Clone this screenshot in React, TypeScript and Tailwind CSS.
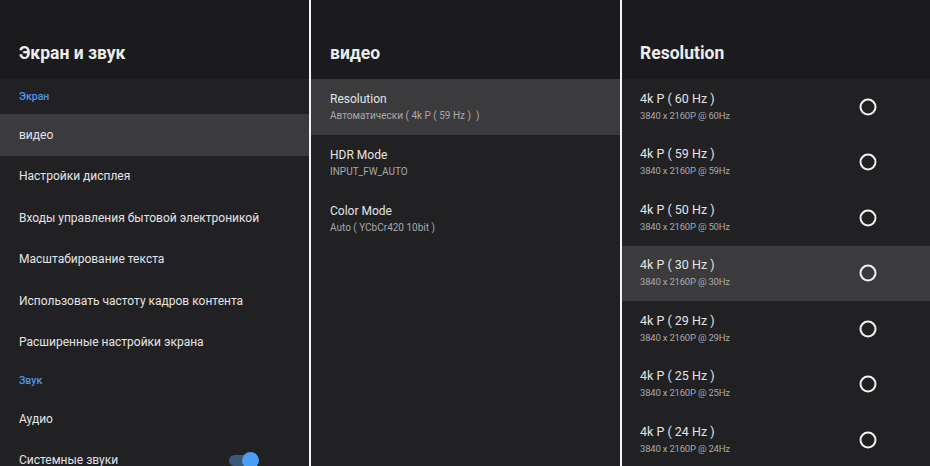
import React from "react";

type Row = { kind: "cat" | "item"; label: string; active?: boolean; toggle?: boolean };

const leftRows: Row[] = [
  { kind: "cat", label: "Экран" },
  { kind: "item", label: "видео", active: true },
  { kind: "item", label: "Настройки дисплея" },
  { kind: "item", label: "Входы управления бытовой электроникой" },
  { kind: "item", label: "Масштабирование текста" },
  { kind: "item", label: "Использовать частоту кадров контента" },
  { kind: "item", label: "Расширенные настройки экрана" },
  { kind: "cat", label: "Звук" },
  { kind: "item", label: "Аудио" },
  { kind: "item", label: "Системные звуки", toggle: true },
];

const videoRows = [
  { title: "Resolution", sub: "Автоматически ( 4k P ( 59 Hz )  )", active: true },
  { title: "HDR Mode", sub: "INPUT_FW_AUTO" },
  { title: "Color Mode", sub: "Auto ( YCbCr420 10bit )" },
];

const rates = [60, 59, 50, 30, 29, 25, 24];

function Header({ title, pl }: { title: string; pl: string }) {
  return (
    <div className={`h-[79px] shrink-0 bg-[#1b1b1d] flex items-end pb-[17px] ${pl}`}>
      <h1 className="text-[17.5px] font-bold text-[#ececec] leading-none">{title}</h1>
    </div>
  );
}

function Toggle() {
  return (
    <div className="relative w-[30px] h-[18px] flex items-center">
      <div className="w-[28px] h-[11px] rounded-full bg-[#3a5878]" />
      <div className="absolute right-0 w-[17px] h-[17px] rounded-full bg-[#4a9ef5]" />
    </div>
  );
}

function Radio() {
  return (
    <svg width="20" height="20" viewBox="0 0 20 20">
      <circle cx="10" cy="10" r="7.5" fill="none" stroke="#f2f2f2" strokeWidth="2" />
    </svg>
  );
}

export default function App() {
  return (
    <div
      className="w-[930px] h-[466px] overflow-hidden flex bg-white"
      style={{ fontFamily: "Roboto, 'Noto Sans', sans-serif" }}
    >
      {/* Screen & sound */}
      <div className="w-[309px] shrink-0 flex flex-col bg-[#212124]">
        <Header title="Экран и звук" pl="pl-[19px]" />
        <div className="flex flex-col">
          {leftRows.map((r, i) =>
            r.kind === "cat" ? (
              <div
                key={i}
                className="h-[35px] pl-[19px] flex items-center text-[10.5px] font-medium text-[#4f97e3]"
              >
                {r.label}
              </div>
            ) : (
              <div
                key={i}
                className={`h-[41.5px] pl-[19px] pr-[50px] flex items-center justify-between whitespace-nowrap text-[12px] text-[#e4e4e4] ${
                  r.active ? "bg-[#3b3b3e]" : ""
                }`}
              >
                <span>{r.label}</span>
                {r.toggle && <Toggle />}
              </div>
            )
          )}
        </div>
      </div>

      <div className="w-[2px] shrink-0 bg-[#f4f4f4]" />

      {/* Video */}
      <div className="w-[309px] shrink-0 flex flex-col bg-[#212124]">
        <Header title="видео" pl="pl-[19px]" />
        <div className="flex flex-col">
          {videoRows.map((r) => (
            <div
              key={r.title}
              className={`h-[56px] pl-[19px] flex flex-col justify-center ${
                r.active ? "bg-[#3b3b3e]" : ""
              }`}
            >
              <div className="text-[12px] text-[#e4e4e4] leading-[16px]">{r.title}</div>
              <div className="text-[10px] text-[#a8a8aa] leading-[14px] mt-[2px] whitespace-pre">
                {r.sub}
              </div>
            </div>
          ))}
        </div>
      </div>

      <div className="w-[2px] shrink-0 bg-[#f4f4f4]" />

      {/* Resolution */}
      <div className="flex-1 flex flex-col bg-[#212124]">
        <Header title="Resolution" pl="pl-[18px]" />
        <div className="flex flex-col">
          {rates.map((hz) => (
            <div
              key={hz}
              className={`h-[55.5px] shrink-0 pl-[18px] pr-[52px] flex items-center justify-between ${
                hz === 30 ? "bg-[#3b3b3e]" : ""
              }`}
            >
              <div className="flex flex-col">
                <div className="text-[12.5px] text-[#e4e4e4] leading-[16px]">{`4k P ( ${hz} Hz )`}</div>
                <div className="text-[9.5px] text-[#a8a8aa] leading-[14px] mt-[2px] tracking-[-0.2px]">
                  {`3840 x 2160P @ ${hz}Hz`}
                </div>
              </div>
              <Radio />
            </div>
          ))}
        </div>
      </div>
    </div>
  );
}
